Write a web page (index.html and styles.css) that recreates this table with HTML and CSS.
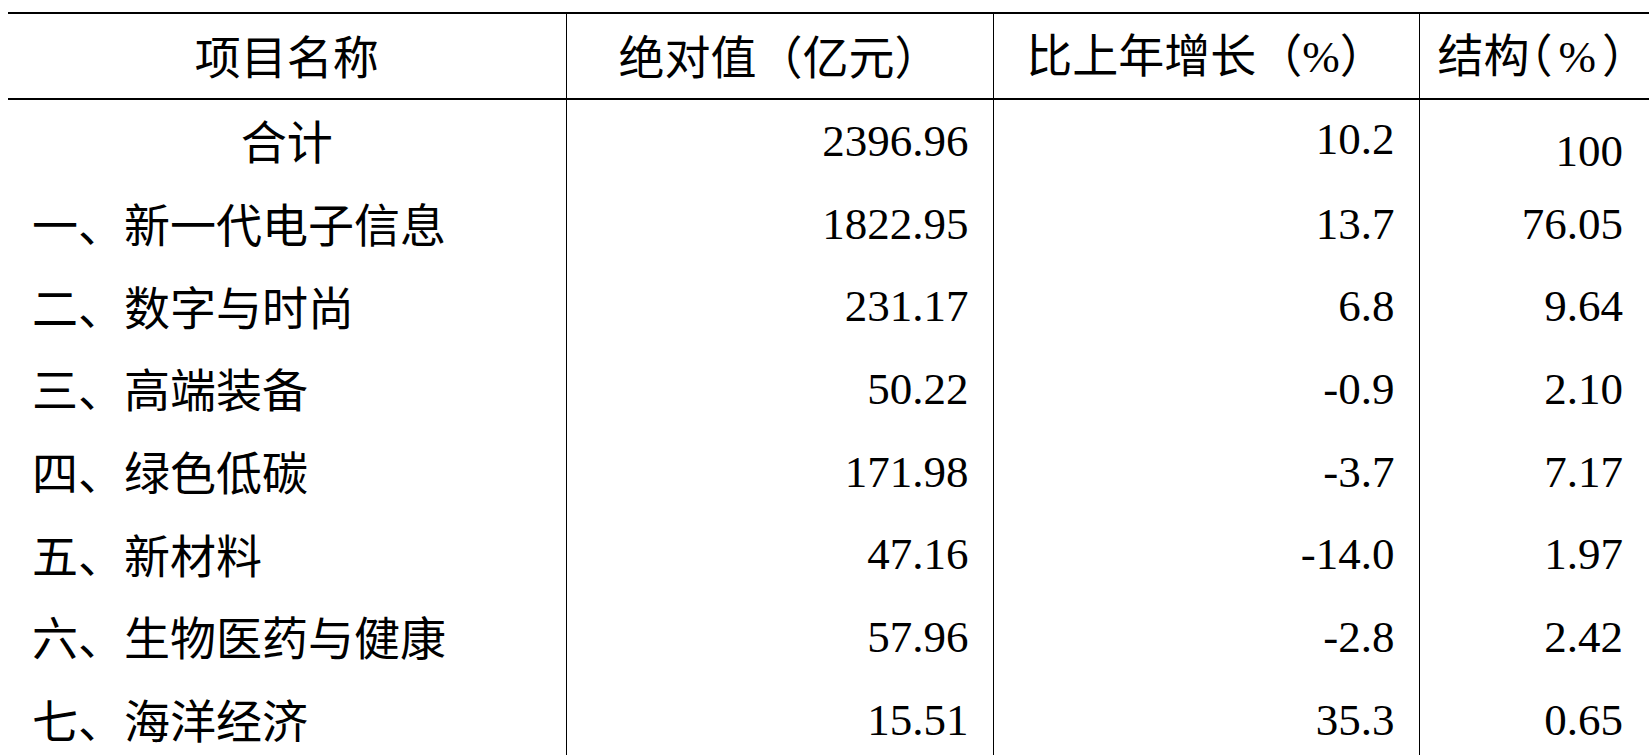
FILE: index.html
```html
<!DOCTYPE html>
<html>
<head>
<meta charset="utf-8">
<title>战略性新兴产业</title>
<link rel="stylesheet" href="styles.css">
</head>
<body>
<div class="page">
<table class="stats">
  <colgroup>
    <col class="c1"><col class="c2"><col class="c3"><col class="c4">
  </colgroup>
  <thead>
    <tr>
      <th>项目名称</th>
      <th>绝对值（亿元）</th>
      <th>比上年增长（<span class="num">%</span>）</th>
      <th>结构<span class="tight">（<span class="num">%</span>）</span></th>
    </tr>
  </thead>
  <tbody>
    <tr><td class="name center">合计</td><td class="num">2396.96</td><td class="num up">10.2</td><td class="num down">100</td></tr>
    <tr><td class="name">一、新一代电子信息</td><td class="num">1822.95</td><td class="num">13.7</td><td class="num">76.05</td></tr>
    <tr><td class="name">二、数字与时尚</td><td class="num">231.17</td><td class="num">6.8</td><td class="num">9.64</td></tr>
    <tr><td class="name">三、高端装备</td><td class="num">50.22</td><td class="num">-0.9</td><td class="num">2.10</td></tr>
    <tr><td class="name">四、绿色低碳</td><td class="num">171.98</td><td class="num">-3.7</td><td class="num">7.17</td></tr>
    <tr><td class="name">五、新材料</td><td class="num">47.16</td><td class="num">-14.0</td><td class="num">1.97</td></tr>
    <tr><td class="name">六、生物医药与健康</td><td class="num">57.96</td><td class="num">-2.8</td><td class="num">2.42</td></tr>
    <tr><td class="name">七、海洋经济</td><td class="num">15.51</td><td class="num">35.3</td><td class="num">0.65</td></tr>
  </tbody>
</table>
</div>
</body>
</html>
```
FILE: styles.css
```css
html, body {
  margin: 0;
  padding: 0;
  background: #fff;
  overflow: hidden;
}
.page {
  padding: 12px 0 0 8px;
  height: 755px;
  box-sizing: border-box;
  overflow: hidden;
}
.stats {
  border-collapse: collapse;
  table-layout: fixed;
  width: 1641px;
  font-family: "Noto Sans CJK SC", sans-serif;
  font-size: 46px;
  color: #000;
}
.num {
  font-family: "Liberation Serif", "Times New Roman", Tinos, "DejaVu Serif", serif;
  font-size: 45px;
}
.c1 { width: 558px; }
.c2 { width: 427px; }
.c3 { width: 426px; }
.c4 { width: 230px; }
.stats th {
  height: 80px;
  font-weight: normal;
  text-align: center;
  vertical-align: middle;
  line-height: 1;
  padding: 0 0 4px 0;
  border-top: 2px solid #000;
  border-bottom: 2px solid #000;
}
.stats th + th,
.stats td + td {
  border-left: 1.5px solid #000;
}
.stats td {
  height: 82.7px;
  line-height: 1;
  padding: 0 24px 0 0;
  text-align: right;
  vertical-align: middle;
}
.stats td:last-child {
  padding-right: 26px;
}
.stats td.name {
  height: 78.7px;
  text-align: left;
  padding: 0 0 4px 24px;
}
.stats td.center {
  text-align: center;
  padding: 0 0 4px 0;
}
.tight {
  font-feature-settings: "halt";
  letter-spacing: 6px;
}
.up {
  position: relative;
  top: -2px;
}
.down {
  position: relative;
  top: 10px;
}
```
